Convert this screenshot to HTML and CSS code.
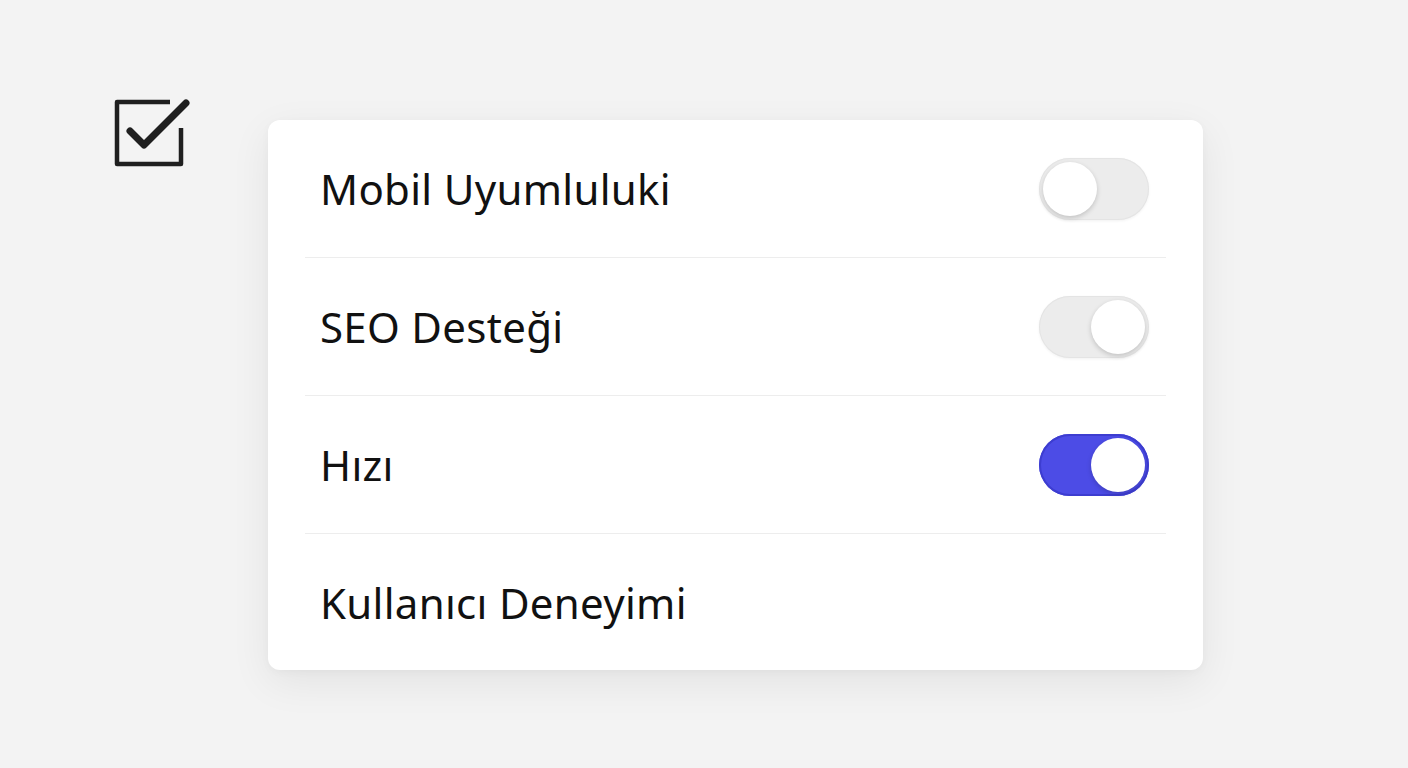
FILE: index.html
```html
<!DOCTYPE html>
<html lang="tr">
<head>
    <meta charset="UTF-8">
    <title>Ayarlar</title>
    <link rel="stylesheet" href="styles.css">
</head>
<body>
    <div class="page">
        <!-- Onay ikonu -->
        <svg class="check-icon" width="80" height="72" viewBox="0 0 80 72">
            <path d="M57 4 H4 V66 H68 V30" fill="none" stroke="#1f1f1f" stroke-width="4.5" stroke-linejoin="round"/>
            <path d="M17 33 L31 47 L73 5" fill="none" stroke="#1f1f1f" stroke-width="7" stroke-linecap="round" stroke-linejoin="round"/>
        </svg>

        <div class="card">
            <div class="row">
                <span class="label">Mobil Uyumluluki</span>
                <div class="toggle"><div class="knob"></div></div>
            </div>
            <div class="row">
                <span class="label">SEO Desteği</span>
                <div class="toggle right"><div class="knob"></div></div>
            </div>
            <div class="row">
                <span class="label">Hızı</span>
                <div class="toggle on"><div class="knob"></div></div>
            </div>
            <div class="row last">
                <span class="label">Kullanıcı Deneyimi</span>
            </div>
        </div>
    </div>
</body>
</html>
```

FILE: styles.css
```css
body {
    margin: 0;
    background-color: #f3f3f3;
    font-family: "Noto Sans", "Open Sans", sans-serif;
    color: #111;
}

.page {
    position: relative;
    height: 768px;
    padding-top: 120px;
    padding-left: 268px;
    box-sizing: border-box;
}

.check-icon {
    position: absolute;
    left: 113px;
    top: 98px;
}

.card {
    width: 935px;
    height: 550px;
    background: white;
    border-radius: 12px;
    box-shadow: 0 12px 40px rgba(0, 0, 0, 0.07), 0 2px 8px rgba(0, 0, 0, 0.03);
    padding: 0 37px;
    box-sizing: border-box;
}

.row {
    display: flex;
    align-items: center;
    justify-content: space-between;
    height: 138px;
    padding: 0 17px 0 15px;
    border-bottom: 1px solid #ededed;
    box-sizing: border-box;
}

.row.last {
    border-bottom: none;
    height: 136px;
}

.label {
    font-size: 42px;
    letter-spacing: 0.3px;
}

.toggle {
    width: 110px;
    height: 62px;
    border-radius: 31px;
    background: #ececec;
    box-shadow: inset 0 0 0 1px #e4e4e4, 0 1px 3px rgba(0, 0, 0, 0.06);
    position: relative;
    flex-shrink: 0;
}

.knob {
    position: absolute;
    top: 4px;
    left: 4px;
    width: 54px;
    height: 54px;
    border-radius: 50%;
    background: white;
    box-shadow: 0 2px 5px rgba(0, 0, 0, 0.18);
}

.toggle.right .knob,
.toggle.on .knob {
    left: 52px;
}

.toggle.on {
    background: #4c4ce6;
    box-shadow: inset 0 0 0 2px #3d3dd0;
}
```
